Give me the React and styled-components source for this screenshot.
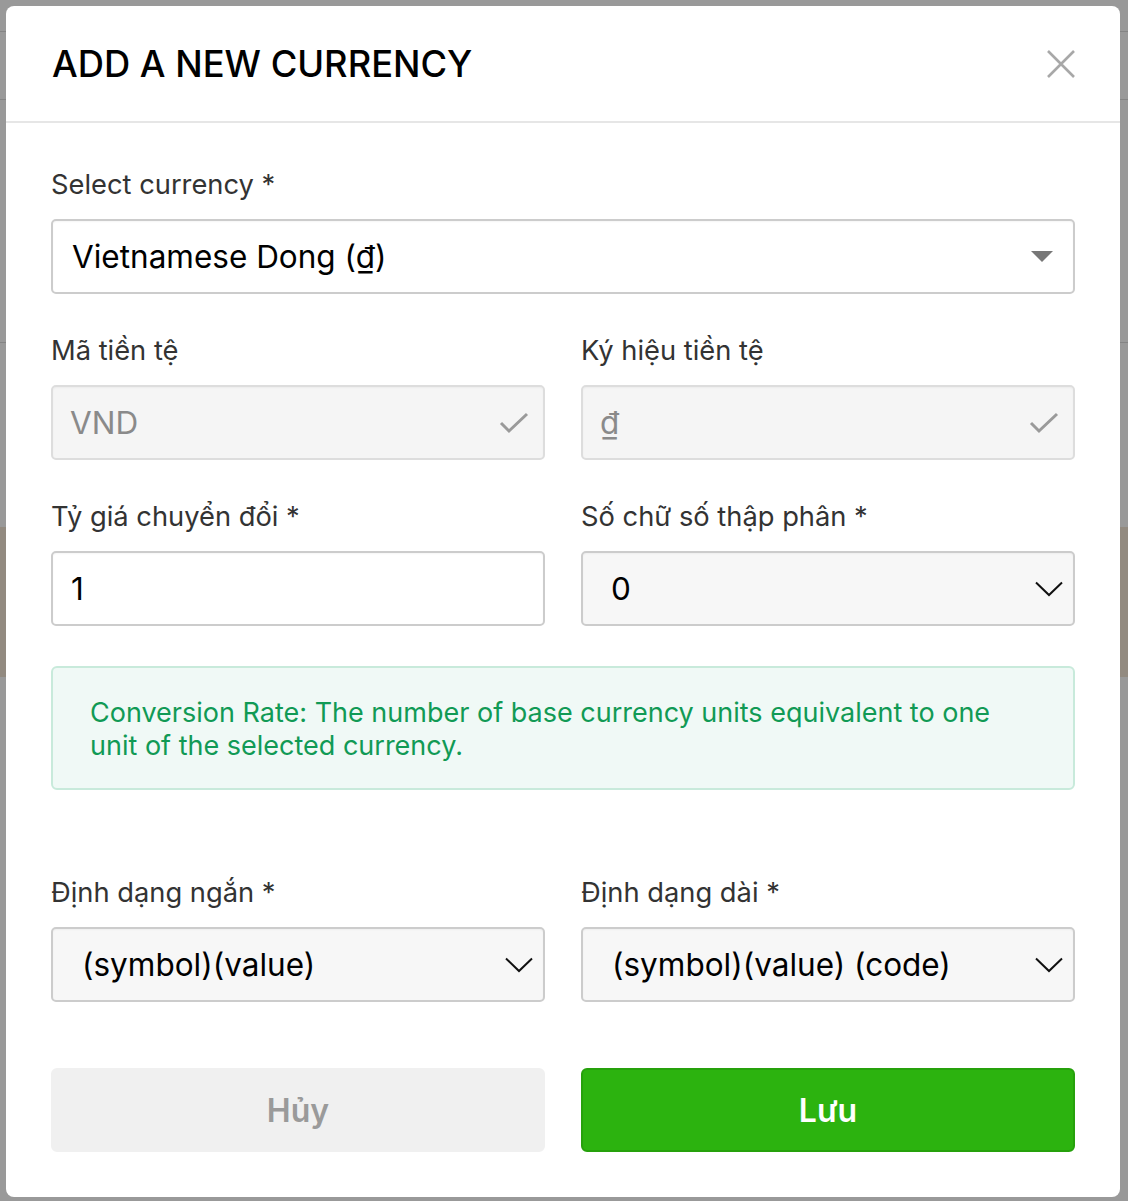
import React from "react";
import styled, { createGlobalStyle } from "styled-components";

const GlobalStyle = createGlobalStyle`
  html, body { margin: 0; padding: 0; }
  body { font-family: Inter, "Noto Sans", "Liberation Sans", sans-serif; }
  * { box-sizing: border-box; }
`;

const Page = styled.div`
  position: relative;
  width: 1128px;
  height: 1201px;
  background: #ffffff;
  overflow: hidden;
`;

const Behind = styled.div`
  position: absolute;
  inset: 0;
  display: flex;
  flex-direction: column;
`;

const BehindRow = styled.div`
  height: ${(p) => p.$h}px;
  flex-shrink: 0;
  background: ${(p) => p.$bg || "#fff"};
  border-bottom: ${(p) => (p.$line ? "1px solid #ddd" : "none")};
`;

const Overlay = styled.div`
  position: absolute;
  inset: 0;
  background: rgba(0, 0, 0, 0.4);
  padding: 6px 8px 4px 6px;
`;

const Modal = styled.div`
  width: 1114px;
  height: 1191px;
  background: #fff;
  border-radius: 8px;
  display: flex;
  flex-direction: column;
`;

const Header = styled.div`
  height: 117px;
  flex-shrink: 0;
  border-bottom: 2px solid #e6e6e6;
  display: flex;
  align-items: center;
  justify-content: space-between;
  padding: 0 43px 0 46px;
`;

const Title = styled.h1`
  margin: 0;
  font-size: 36.3px;
  font-weight: 500;
  color: #000;
`;

const CloseButton = styled.button`
  border: none;
  background: none;
  padding: 0;
  width: 32px;
  height: 32px;
  display: flex;
  align-items: center;
  justify-content: center;
  cursor: pointer;
`;

const Body = styled.div`
  padding: 45px 45px 0 45px;
  display: flex;
  flex-direction: column;
`;

const Row = styled.div`
  display: grid;
  grid-template-columns: 494px 494px;
  column-gap: 36px;
  margin-top: ${(p) => p.$mt || 0}px;
`;

const Field = styled.div`
  display: flex;
  flex-direction: column;
`;

const Label = styled.label`
  font-size: 27.3px;
  line-height: 34px;
  color: #333;
  margin-bottom: 17px;
`;

const Control = styled.div`
  height: 75px;
  border: 2px solid ${(p) => (p.$disabled ? "#dddddd" : "#cccccc")};
  border-radius: 5px;
  background: ${(p) => p.$bg || "#fff"};
  display: flex;
  align-items: center;
  justify-content: space-between;
  padding: 0 ${(p) => p.$pr || 12}px 0 ${(p) => p.$pl || 18}px;
  font-size: 31.5px;
  color: ${(p) => (p.$disabled ? "#8a8a8a" : "#000")};
  box-shadow: inset 0 1px 2px rgba(0, 0, 0, 0.04);
`;

const Info = styled.div`
  margin-top: 40px;
  height: 124px;
  background: #f0f9f6;
  border: 2px solid #c8eadb;
  border-radius: 6px;
  padding: 28px 36px 0 37px;
  color: #119a55;
  font-size: 27px;
  line-height: 33px;
`;

const Actions = styled.div`
  display: grid;
  grid-template-columns: 494px 494px;
  column-gap: 36px;
  margin-top: 66px;
`;

const Button = styled.button`
  height: 84px;
  border-radius: 6px;
  font-family: Inter, sans-serif;
  font-size: 32px;
  font-weight: 600;
  cursor: pointer;
  border: 2px solid ${(p) => (p.$primary ? "#26a10c" : "#f0f0f0")};
  background: ${(p) => (p.$primary ? "#2cb30f" : "#f0f0f0")};
  color: ${(p) => (p.$primary ? "#ffffff" : "#9a9a9a")};
`;

const Caret = () => (
  <svg width="22" height="12" viewBox="0 0 22 12">
    <path d="M0 0 L22 0 L11 11 Z" fill="#777" />
  </svg>
);

const Check = () => (
  <svg width="30" height="22" viewBox="0 0 30 22">
    <path d="M2 11 L10 19 L28 2" fill="none" stroke="#9a9a9a" strokeWidth="3" />
  </svg>
);

const Chevron = () => (
  <svg width="28" height="16" viewBox="0 0 28 16">
    <path d="M1 1.5 L14 14 L27 1.5" fill="none" stroke="#111" strokeWidth="2" />
  </svg>
);

const CloseIcon = () => (
  <svg width="30" height="30" viewBox="0 0 30 30">
    <path d="M2 2 L28 28 M28 2 L2 28" stroke="#a8a8a8" strokeWidth="2.6" fill="none" />
  </svg>
);

export default function App() {
  return (
    <>
      <GlobalStyle />
      <Page>
        <Behind>
          <BehindRow $h={32} $line />
          <BehindRow $h={68} $line />
          <BehindRow $h={243} $line />
          <BehindRow $h={184} />
          <BehindRow $h={150} $bg="#f3e6d6" />
          <BehindRow $h={524} />
        </Behind>
        <Overlay>
          <Modal>
            <Header>
              <Title>ADD A NEW CURRENCY</Title>
              <CloseButton aria-label="Close">
                <CloseIcon />
              </CloseButton>
            </Header>
            <Body>
              <Field>
                <Label>Select currency *</Label>
                <Control $pl={19} $pr={20}>
                  <span>Vietnamese Dong (₫)</span>
                  <Caret />
                </Control>
              </Field>
              <Row $mt={40}>
                <Field>
                  <Label>Mã tiền tệ</Label>
                  <Control $disabled $bg="#f5f5f5" $pr={14} $pl={17}>
                    <span>VND</span>
                    <Check />
                  </Control>
                </Field>
                <Field>
                  <Label>Ký hiệu tiền tệ</Label>
                  <Control $disabled $bg="#f5f5f5" $pr={14} $pl={17}>
                    <span>₫</span>
                    <Check />
                  </Control>
                </Field>
              </Row>
              <Row $mt={40}>
                <Field>
                  <Label>Tỷ giá chuyển đổi *</Label>
                  <Control>
                    <span>1</span>
                  </Control>
                </Field>
                <Field>
                  <Label>Số chữ số thập phân *</Label>
                  <Control $bg="#f7f7f7" $pl={28} $pr={10}>
                    <span>0</span>
                    <Chevron />
                  </Control>
                </Field>
              </Row>
              <Info>
                Conversion Rate: The number of base currency units equivalent to one unit of the selected currency.
              </Info>
              <Row $mt={86}>
                <Field>
                  <Label>Định dạng ngắn *</Label>
                  <Control $bg="#f7f7f7" $pl={29} $pr={10}>
                    <span>(symbol)(value)</span>
                    <Chevron />
                  </Control>
                </Field>
                <Field>
                  <Label>Định dạng dài *</Label>
                  <Control $bg="#f7f7f7" $pl={29} $pr={10}>
                    <span>(symbol)(value) (code)</span>
                    <Chevron />
                  </Control>
                </Field>
              </Row>
              <Actions>
                <Button>Hủy</Button>
                <Button $primary>Lưu</Button>
              </Actions>
            </Body>
          </Modal>
        </Overlay>
      </Page>
    </>
  );
}
